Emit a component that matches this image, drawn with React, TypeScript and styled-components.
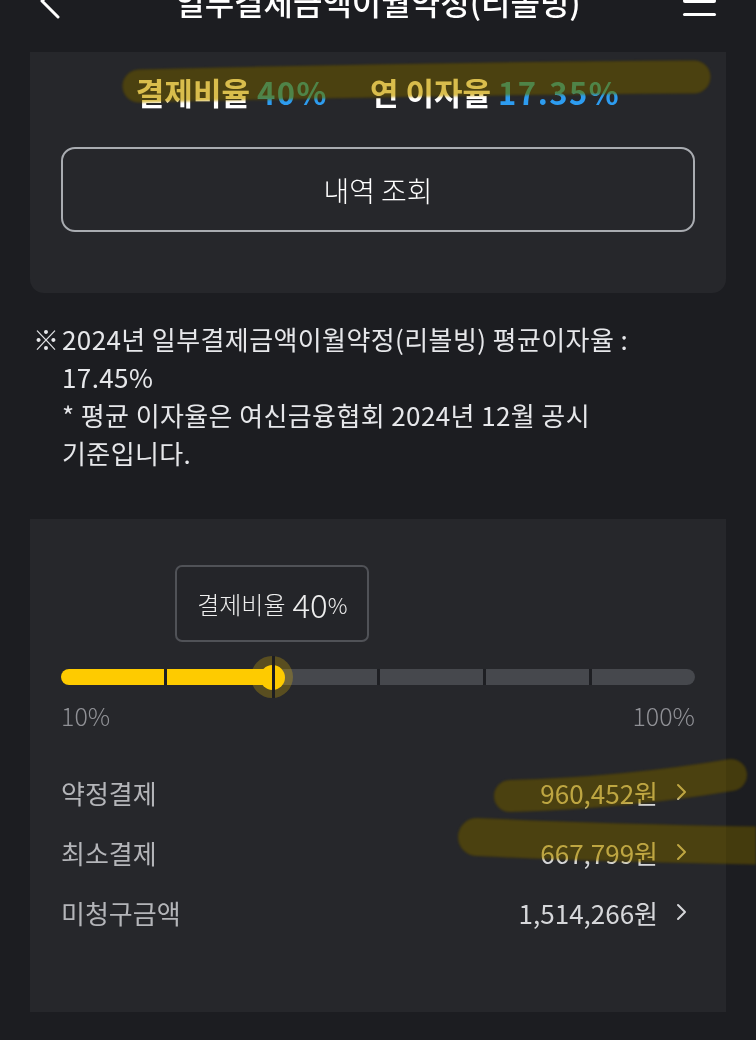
import styled, { createGlobalStyle } from "styled-components";

const GlobalStyle = createGlobalStyle`
  html, body {
    margin: 0;
    padding: 0;
    background: #1c1d21;
  }
  body {
    font-family: "Noto Sans CJK KR", "Noto Sans", sans-serif;
    color: #ffffff;
  }
`;

const Page = styled.div`
  position: relative;
  min-height: 1040px;
  overflow: hidden;
`;

const Header = styled.header`
  display: grid;
  grid-template-columns: 80px 1fr 80px;
  align-items: center;
  height: 100px;
  margin-top: -49px;
`;

const BackButton = styled.div`
  display: flex;
  align-items: center;
  padding-left: 40px;
`;

const Title = styled.h1`
  margin: 0;
  text-align: center;
  font-size: 32px;
  font-weight: 500;
  color: #ffffff;
  white-space: nowrap;
`;

const Menu = styled.div`
  display: flex;
  flex-direction: column;
  gap: 10px;
  width: 33px;
  margin-left: 7px;
  span {
    display: block;
    height: 3.5px;
    border-radius: 2px;
    background: #ffffff;
  }
`;

const Card = styled.section<{ $rounded?: boolean }>`
  margin: 0 30px;
  background: #26272b;
  border-radius: ${(p) => (p.$rounded ? "0 0 14px 14px" : "0")};
`;

const SummaryCard = styled(Card)`
  padding: 20px 31px 61px;
  margin-top: 1px;
`;

const Summary = styled.div`
  display: flex;
  justify-content: center;
  gap: 42px;
  font-size: 31px;
  font-weight: 700;
  line-height: 40px;
`;

const Blue = styled.span`
  color: #2d9cf0;
  letter-spacing: 1.5px;
`;

const HistoryButton = styled.button`
  display: block;
  width: 100%;
  height: 85px;
  margin-top: 35px;
  border: 2px solid #a9acb1;
  border-radius: 14px;
  background: transparent;
  color: #ffffff;
  font-family: inherit;
  font-size: 28px;
  font-weight: 300;
`;

const Notes = styled.div`
  display: flex;
  margin-top: 27px;
  padding-left: 33px;
  font-size: 26px;
  font-weight: 400;
  line-height: 38px;
  letter-spacing: 0.4px;
  color: #e6e7ea;
`;

const NoteMark = styled.span`
  flex: 0 0 29px;
`;

const RatioCard = styled(Card)`
  margin-top: 47px;
  padding: 46px 31px 70px;
`;

const TooltipRow = styled.div`
  position: relative;
  height: 77px;
`;

const Tooltip = styled.div`
  position: absolute;
  top: 0;
  transform: translateX(-50%);
  width: 194px;
  height: 77px;
  box-sizing: border-box;
  display: flex;
  align-items: center;
  justify-content: center;
  border: 2px solid #505257;
  border-radius: 7px;
  background: #242529;
  color: #eeeeee;
  font-size: 24px;
  font-weight: 300;
  white-space: nowrap;
`;

const TipNumber = styled.span`
  margin-left: 7px;
  font-size: 33px;
`;

const TipPercent = styled.span`
  font-size: 22px;
`;

const TrackWrap = styled.div`
  position: relative;
  margin-top: 27px;
`;

const Track = styled.div`
  display: flex;
  gap: 3px;
  height: 16px;
  border-radius: 8px;
  overflow: hidden;
  background: #1e1f23;
`;

const Segment = styled.div<{ $active: boolean }>`
  flex: 1;
  background: ${(p) => (p.$active ? "#fecb00" : "#46484d")};
`;

const Thumb = styled.div`
  position: absolute;
  top: 8px;
  width: 42px;
  height: 42px;
  transform: translate(-50%, -50%);
  border-radius: 50%;
  background: rgba(255, 204, 0, 0.24);
  display: flex;
  align-items: center;
  justify-content: center;
  &::before {
    content: "";
    width: 25px;
    height: 25px;
    border-radius: 50%;
    background: #fecb00;
  }
  &::after {
    content: "";
    position: absolute;
    left: 21px;
    top: 0;
    width: 3px;
    height: 42px;
    background: #1c1d21;
  }
`;

const RangeLabels = styled.div`
  display: flex;
  justify-content: space-between;
  margin-top: 15px;
  font-size: 25px;
  font-weight: 300;
  line-height: 30px;
  color: #909196;
`;

const Rows = styled.div`
  margin-top: 32px;
`;

const Row = styled.div`
  display: flex;
  align-items: center;
  justify-content: space-between;
  height: 60px;
  font-size: 26px;
`;

const RowLabel = styled.span`
  color: #b4b5b9;
`;

const RowValue = styled.span`
  display: flex;
  align-items: center;
  gap: 18px;
  padding-right: 7px;
  color: #d6d7da;
`;

const Overlay = styled.svg<{ $blend: string }>`
  position: absolute;
  top: 0;
  left: 0;
  pointer-events: none;
  mix-blend-mode: ${(p) => p.$blend};
  filter: blur(1px);
`;

const marks = [
  { d: "M 139 86 C 300 82, 500 78, 694 77", w: 33 },
  { d: "M 510 796 C 580 794, 660 787, 731 775", w: 32 },
  { d: "M 477 837 C 560 841, 660 844, 780 846", w: 38 },
];

function Highlights() {
  return (
    <>
      <Overlay $blend="multiply" width="756" height="1040">
        {marks.map((m, i) => (
          <path key={i} d={m.d} stroke="#e8cc66" strokeWidth={m.w} strokeLinecap="round" fill="none" />
        ))}
      </Overlay>
      <Overlay $blend="normal" width="756" height="1040">
        {marks.map((m, i) => (
          <path key={i} d={m.d} stroke="rgba(180,150,10,0.28)" strokeWidth={m.w} strokeLinecap="round" fill="none" />
        ))}
      </Overlay>
    </>
  );
}

function Chevron() {
  return (
    <svg width="12" height="18" viewBox="0 0 12 18">
      <polyline points="2,2 9,9 2,16" fill="none" stroke="currentColor" strokeWidth="2" strokeLinecap="round" strokeLinejoin="round" />
    </svg>
  );
}

const rows = [
  { label: "약정결제", value: "960,452원" },
  { label: "최소결제", value: "667,799원" },
  { label: "미청구금액", value: "1,514,266원" },
];

export default function App() {
  const min = 10;
  const max = 100;
  const value = 40;
  const steps = 6;
  const pct = ((value - min) / (max - min)) * 100;
  const activeSegments = Math.round((pct / 100) * steps);

  return (
    <Page>
      <GlobalStyle />
      <Header>
        <BackButton>
          <svg width="20" height="36" viewBox="0 0 20 36">
            <polyline points="18,2 2,18 18,34" fill="none" stroke="#ffffff" strokeWidth="3" strokeLinecap="round" strokeLinejoin="round" />
          </svg>
        </BackButton>
        <Title>일부결제금액이월약정(리볼빙)</Title>
        <Menu>
          <span />
          <span />
          <span />
        </Menu>
      </Header>

      <SummaryCard $rounded>
        <Summary>
          <span>
            결제비율 <Blue>40%</Blue>
          </span>
          <span>
            연 이자율 <Blue>17.35%</Blue>
          </span>
        </Summary>
        <HistoryButton>내역 조회</HistoryButton>
      </SummaryCard>

      <Notes>
        <NoteMark>※</NoteMark>
        <div>
          2024년 일부결제금액이월약정(리볼빙) 평균이자율 :
          <br />
          17.45%
          <br />* 평균 이자율은 여신금융협회 2024년 12월 공시
          <br />
          기준입니다.
        </div>
      </Notes>

      <RatioCard>
        <TooltipRow>
          <Tooltip style={{ left: `${pct}%` }}>
            결제비율
            <TipNumber>40</TipNumber>
            <TipPercent>%</TipPercent>
          </Tooltip>
        </TooltipRow>
        <TrackWrap>
          <Track>
            {Array.from({ length: steps }).map((_, i) => (
              <Segment key={i} $active={i < activeSegments} />
            ))}
          </Track>
          <Thumb style={{ left: `${pct}%` }} />
        </TrackWrap>
        <RangeLabels>
          <span>10%</span>
          <span>100%</span>
        </RangeLabels>
        <Rows>
          {rows.map((r) => (
            <Row key={r.label}>
              <RowLabel>{r.label}</RowLabel>
              <RowValue>
                {r.value}
                <Chevron />
              </RowValue>
            </Row>
          ))}
        </Rows>
      </RatioCard>

      <Highlights />
    </Page>
  );
}
